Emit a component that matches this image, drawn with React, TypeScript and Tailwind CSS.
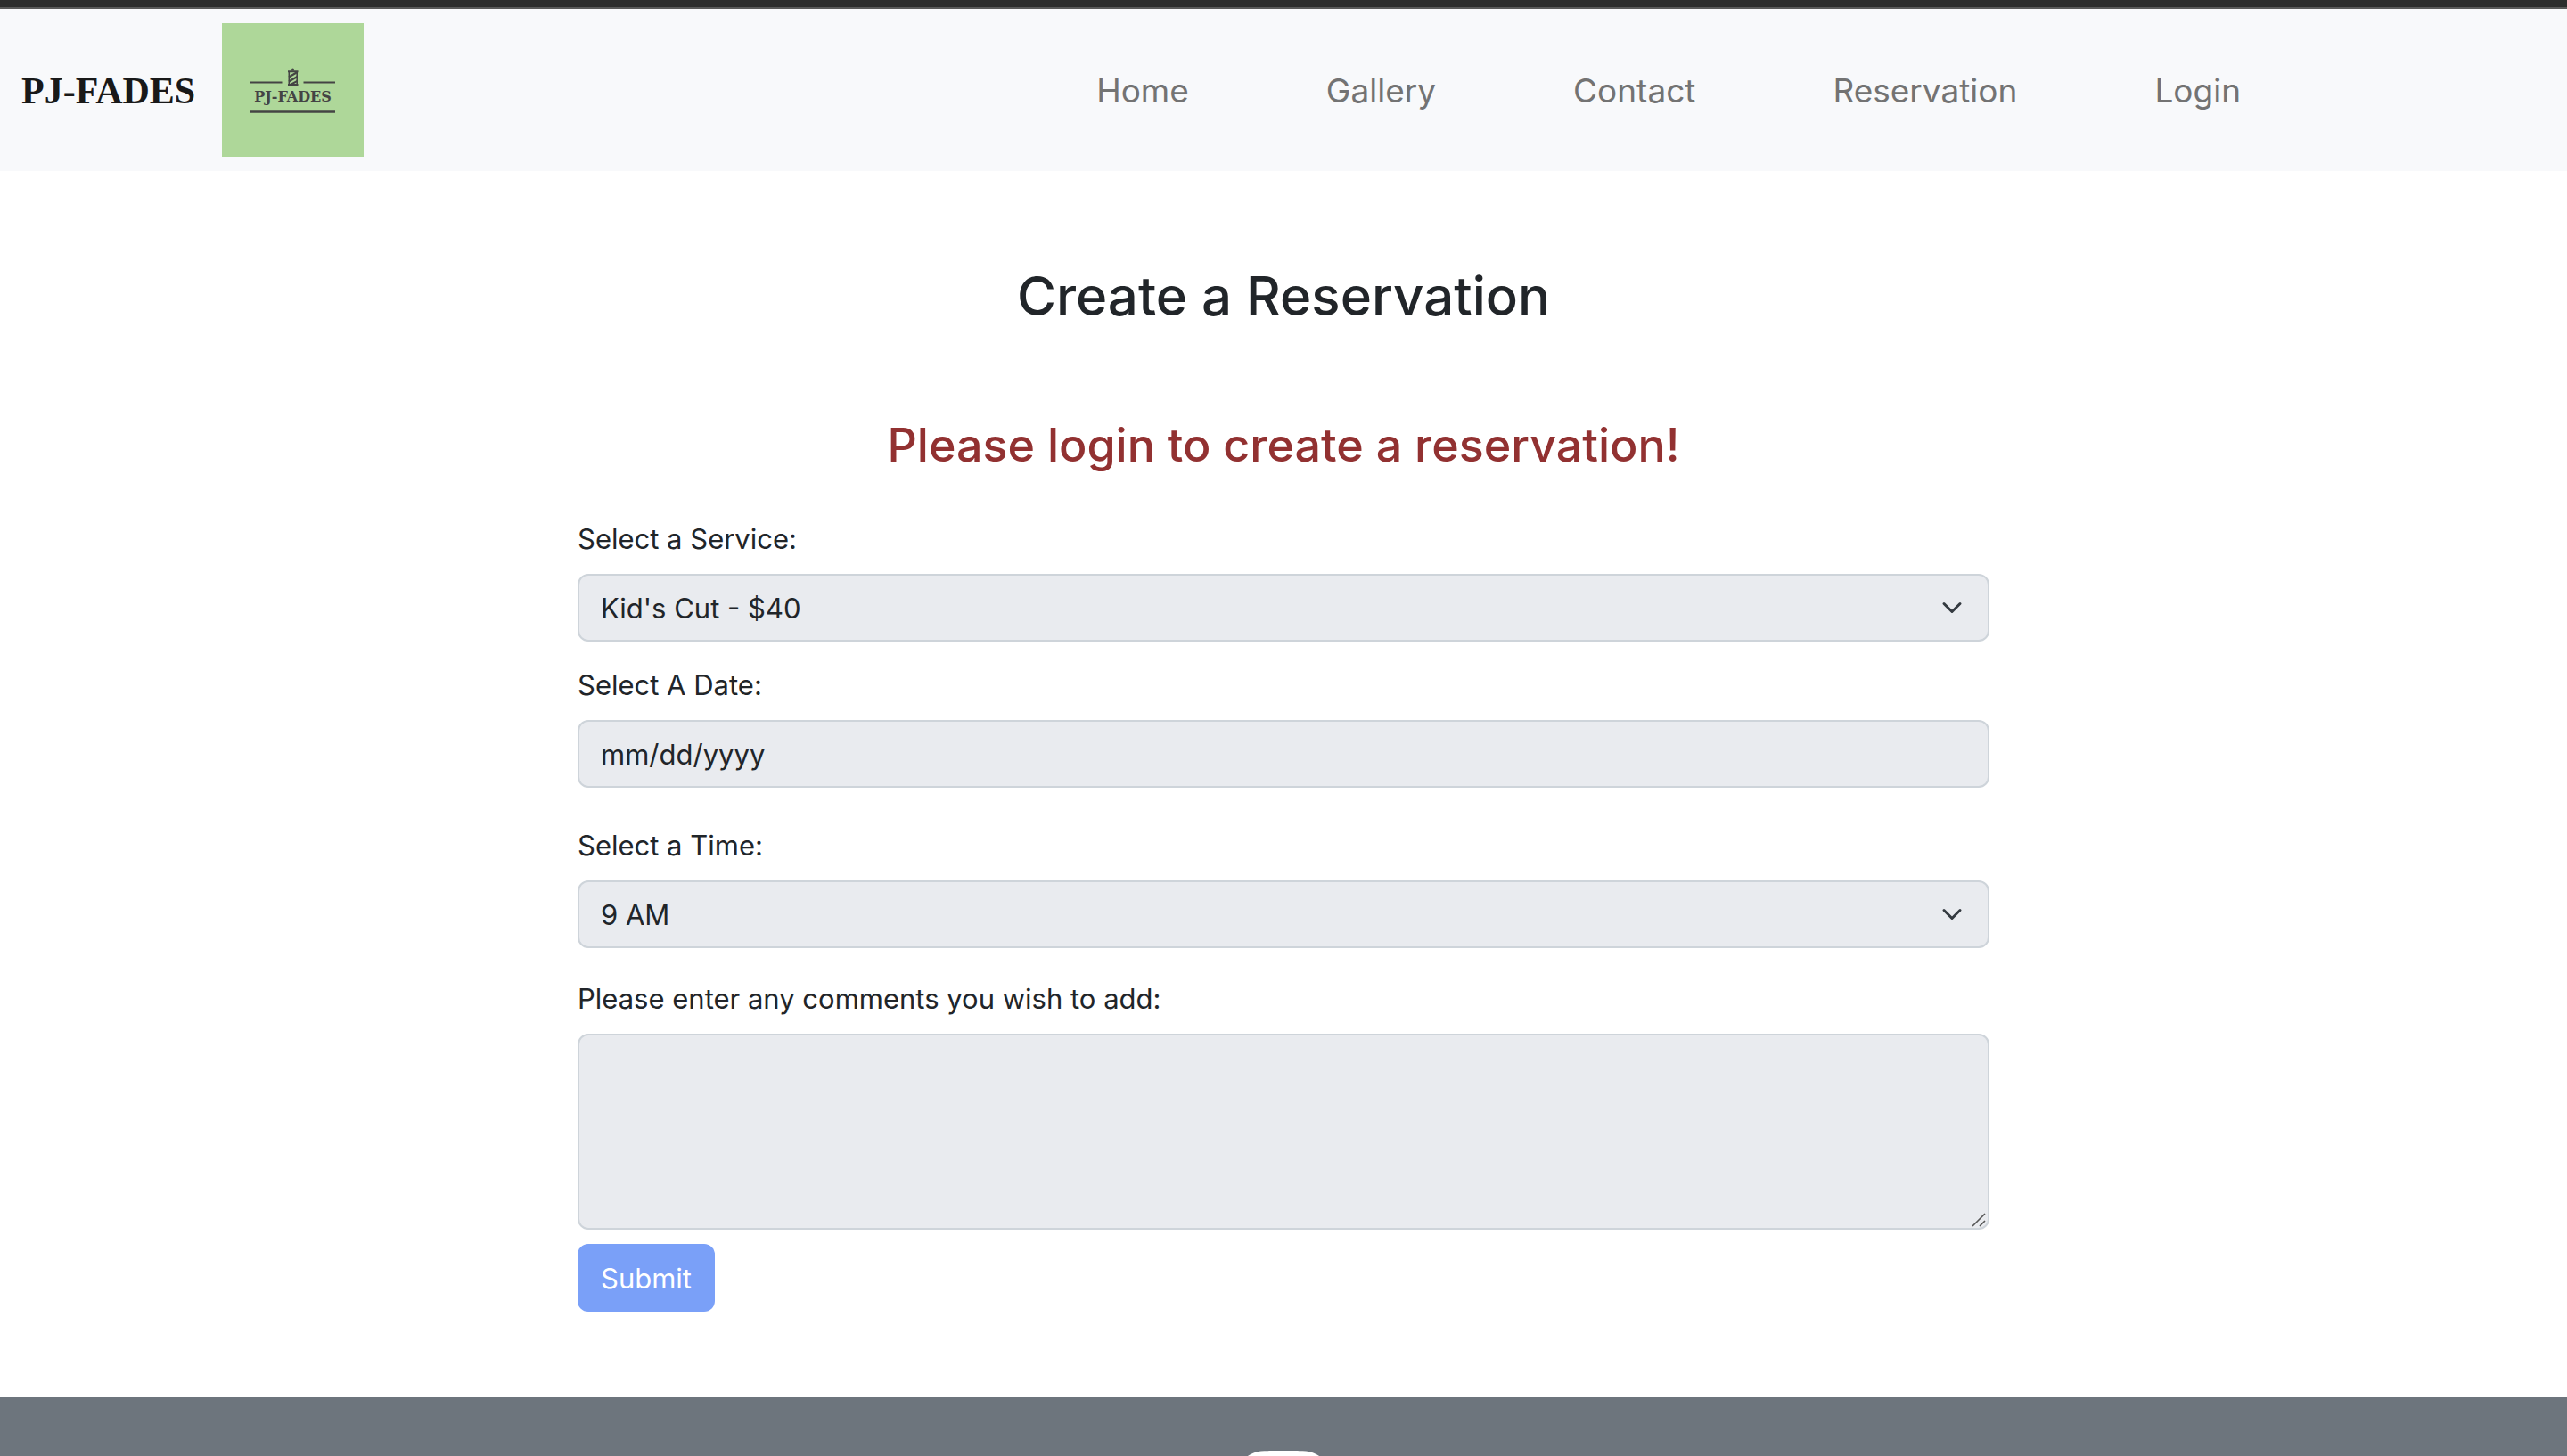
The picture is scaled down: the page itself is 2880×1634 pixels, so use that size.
import type { ReactNode } from "react";
import { BsInstagram } from "react-icons/bs";

const links = ["Home", "Gallery", "Contact", "Reservation", "Login"];

const control =
  "block w-full rounded-xl border-2 border-[#ced4da] bg-[#e9ebef] text-[31px] leading-[48px] text-[#212529] opacity-100";

const dateParts =
  "[&::-webkit-calendar-picker-indicator]:hidden [&::-webkit-datetime-edit]:text-[#212529] [&::-webkit-datetime-edit-month-field]:p-0 [&::-webkit-datetime-edit-day-field]:p-0 [&::-webkit-datetime-edit-year-field]:p-0 [&::-webkit-datetime-edit-text]:p-0";

function Logo() {
  return (
    <svg viewBox="0 0 159 150" className="h-[150px] w-[159px] shrink-0 bg-[#aed799]" role="img" aria-label="PJ-FADES logo">
      <g stroke="#444" strokeWidth="2" fill="none">
        <path d="M32 66.5H67.5M91.5 66.5H127" />
        <path d="M32 99.5H127" strokeWidth="2.6" />
        <path d="M74 54.3H85.5M74 69H85.5" />
        <path d="M75.3 54V69.5M84.2 54V69.5" strokeWidth="1.6" />
        <path d="M75 60.5L84.5 55M75 65.5L84.5 60M76 69.5L84.5 64.8" strokeWidth="2.1" />
      </g>
      <path d="M78 53.5V52a1.5 1.5 0 0 1 3 0V53.5Z" fill="#444" />
      <text x="79.5" y="88" textAnchor="middle" fill="#444" fontSize="16" fontWeight="700" fontFamily="'DejaVu Serif', serif">
        PJ-FADES
      </text>
    </svg>
  );
}

function Field({ id, label, children }: { id: string; label: string; children: ReactNode }) {
  return (
    <div className="flex flex-col gap-[14px]">
      <label htmlFor={id} className="text-[31px] leading-[50px]">
        {label}
      </label>
      <div className="relative">{children}</div>
    </div>
  );
}

function Select({ id, value }: { id: string; value: string }) {
  return (
    <>
      <select id={id} disabled className={`${control} h-[76px] appearance-none px-6 pt-[2px]`}>
        <option>{value}</option>
      </select>
      <svg
        viewBox="0 0 16 16"
        className="pointer-events-none absolute top-[26px] right-[30px] h-6 w-6"
        fill="none"
        stroke="#343a40"
        strokeWidth="2"
        strokeLinecap="round"
        strokeLinejoin="round"
      >
        <path d="m2 5 6 6 6-6" />
      </svg>
    </>
  );
}

export default function App() {
  return (
    <div className="flex h-screen flex-col overflow-hidden bg-white font-['Inter',sans-serif] text-[#212529]">
      <header className="shrink-0 border-t-8 border-[#2d2d2d]">
        <nav className="flex items-center border-t-2 border-[#5a5a5a] bg-[#f8f9fb] py-4 pr-[366px] pl-6">
          <a href="#" className="mr-[30px] pt-[2px] font-['Liberation_Serif',serif] text-[42px] leading-[60px] font-bold text-[#191919]">
            PJ-FADES
          </a>
          <Logo />
          <ul className="ml-auto flex gap-[154px] pt-[2px] text-[37px] leading-[60px] text-[#737373]">
            {links.map((l) => (
              <li key={l}>
                <a href="#">{l}</a>
              </li>
            ))}
          </ul>
        </nav>
      </header>

      <main className="mx-auto w-[55%] shrink-0 pb-24">
        <h1 className="pt-[102px] text-center text-[60px] leading-[76px] font-medium">Create a Reservation</h1>
        <h2 className="mt-24 text-center text-[52px] leading-[68px] font-medium text-[#923131]">
          Please login to create a reservation!
        </h2>
        <form className="mt-[46px]">
          <Field id="service" label="Select a Service:">
            <Select id="service" value="Kid's Cut - $40" />
          </Field>
          <div className="mt-6">
            <Field id="date" label="Select A Date:">
              <input id="date" type="date" disabled className={`${control} h-[76px] px-6 pt-[2px] ${dateParts}`} />
            </Field>
          </div>
          <div className="mt-10">
            <Field id="time" label="Select a Time:">
              <Select id="time" value="9 AM" />
            </Field>
          </div>
          <div className="mt-8">
            <Field id="comments" label="Please enter any comments you wish to add:">
              <textarea id="comments" disabled className={`${control} h-[220px] resize-none px-6 py-3`} />
              <svg
                viewBox="0 0 16 16"
                className="pointer-events-none absolute right-1 bottom-[3px] h-4 w-4"
                stroke="#555"
                strokeWidth="1.6"
              >
                <path d="M1 15 15 1M9 15l6-6" />
              </svg>
            </Field>
          </div>
          <button
            type="submit"
            disabled
            className="mt-4 h-[76px] rounded-xl bg-[#7aa0f8] px-[26px] pt-[2px] text-[31px] leading-[48px] text-white"
          >
            Submit
          </button>
        </form>
      </main>

      <footer className="flex flex-1 shrink-0 justify-center bg-[#6d757d] pt-[60px]">
        <a href="#" aria-label="Instagram" className="h-[104px] text-white">
          <BsInstagram size={104} />
        </a>
      </footer>
    </div>
  );
}
